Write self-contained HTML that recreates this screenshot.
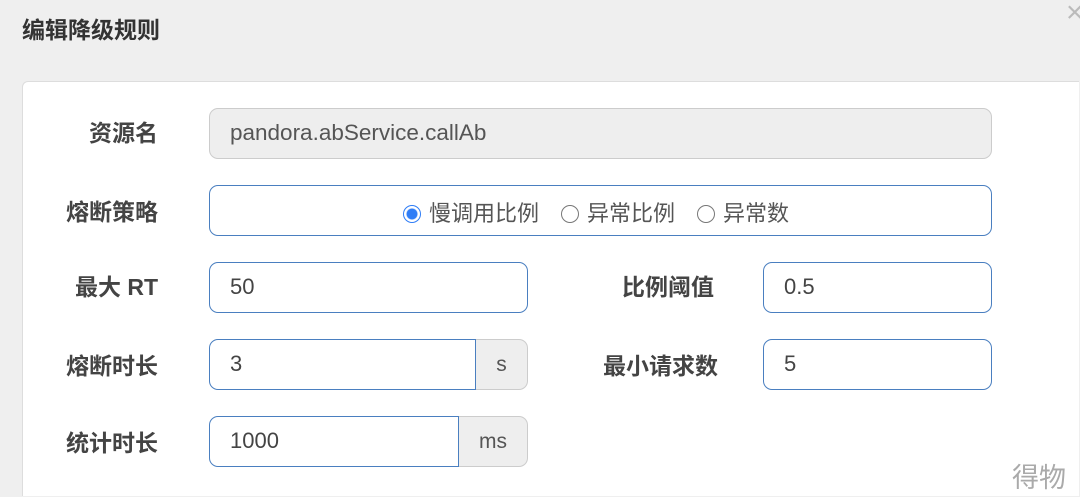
<!DOCTYPE html>
<html><head><meta charset="utf-8"><style>
html,body{margin:0;width:1080px;height:497px;overflow:hidden;}
body{background:#efefef;position:relative;font-family:"Liberation Sans","Noto Sans CJK SC",sans-serif;}
.t{position:absolute;left:22px;top:11px;font-size:23px;font-weight:bold;color:#333;}
.x{position:absolute;left:1066px;top:-4px;font-size:30px;color:#bbb;}
.panel{position:absolute;left:22px;top:81px;width:1056px;height:414px;background:#fff;border:1px solid #ddd;border-right:none;border-bottom:none;border-radius:6px 0 0 0;}
.l{position:absolute;font-size:23px;font-weight:bold;color:#444;text-align:right;height:51px;line-height:51px;}
.i{position:absolute;box-sizing:border-box;height:51px;border:1.5px solid #4a7fc0;border-radius:9px;background:#fff;font-size:22px;color:#444;line-height:48px;padding-left:20px;}
.a{position:absolute;box-sizing:border-box;height:51px;border:1px solid #ccc;border-left:none;border-radius:0 9px 9px 0;background:#eee;font-size:21px;color:#555;line-height:50px;text-align:center;}
.r{display:inline-block;width:18px;height:18px;border:1.5px solid #777;border-radius:50%;box-sizing:border-box;vertical-align:-2px;margin-right:8px;}
.sp{display:inline-block;width:22px}
.w{position:absolute;left:1012px;top:456px;font-size:27px;color:#aaa;}
</style></head><body>
<div class="t">编辑降级规则</div>
<div class="x">×</div>
<div class="panel"></div>
<div class="l" style="left:40px;width:118px;top:108px">资源名</div>
<div class="i" style="left:209px;width:783px;top:108px;background:#eee;border:1px solid #ccc;color:#555;font-size:22.5px">pandora.abService.callAb</div>
<div class="l" style="left:40px;width:118px;top:187px">熔断策略</div>
<div class="i" style="left:209px;width:783px;top:185px;padding-left:193px;font-size:22px;color:#555;line-height:56px"><span class="r" style="border:1.5px solid #2f7df6;background:radial-gradient(circle,#2f7df6 5px,#fff 6px)"></span>慢调用比例<span class="sp"></span><span class="r"></span>异常比例<span class="sp"></span><span class="r"></span>异常数</div>
<div class="l" style="left:40px;width:118px;top:262px">最大 RT</div>
<div class="i" style="left:209px;width:319px;top:262px">50</div>
<div class="l" style="left:560px;width:154px;top:262px">比例阈值</div>
<div class="i" style="left:763px;width:229px;top:262px">0.5</div>
<div class="l" style="left:40px;width:118px;top:341px">熔断时长</div>
<div class="i" style="left:209px;width:267px;top:339px;border-radius:9px 0 0 9px">3</div>
<div class="a" style="left:476px;width:52px;top:339px">s</div>
<div class="l" style="left:560px;width:158px;top:341px">最小请求数</div>
<div class="i" style="left:763px;width:229px;top:339px">5</div>
<div class="l" style="left:40px;width:118px;top:418px">统计时长</div>
<div class="i" style="left:209px;width:250px;top:416px;border-radius:9px 0 0 9px">1000</div>
<div class="a" style="left:459px;width:69px;top:416px">ms</div>
<div class="w">得物</div>
</body></html>
